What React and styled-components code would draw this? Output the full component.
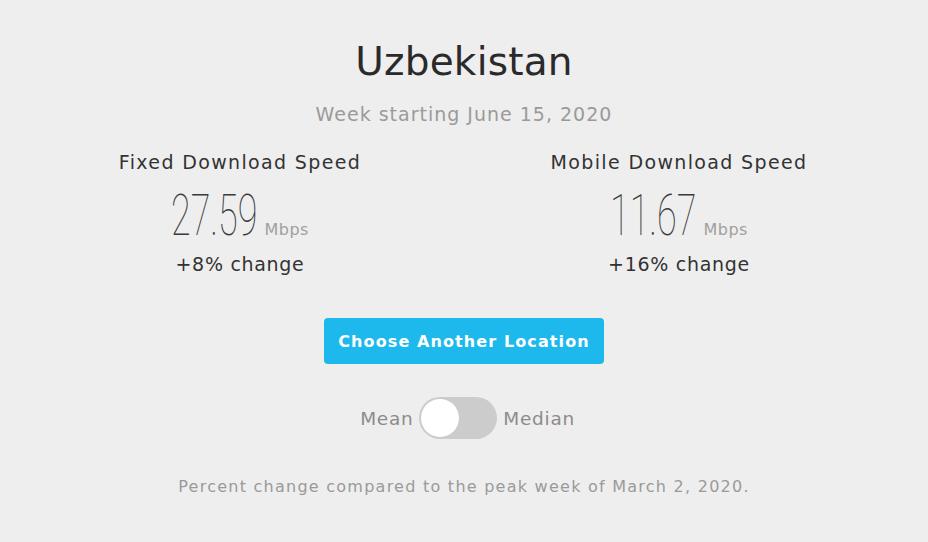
import React, { useState } from 'react';
import styled, { createGlobalStyle } from 'styled-components';

const GlobalStyle = createGlobalStyle`
  html, body {
    margin: 0;
    padding: 0;
    background: #eeeeee;
  }
  body {
    font-family: "DejaVu Sans", "Open Sans", sans-serif;
  }
`;

// speeds for the two columns
const speeds = [
  { label: 'Fixed Download Speed', value: '27.59', change: '+8% change' },
  { label: 'Mobile Download Speed', value: '11.67', change: '+16% change' },
];

const App = () => {
  const [median, setMedian] = useState(false);

  return (
    <Page>
      <GlobalStyle />
      <Title>Uzbekistan</Title>
      <Week>Week starting June 15, 2020</Week>
      <Columns>
        {speeds.map(s => (
          <Column key={s.label}>
            <Label>{s.label}</Label>
            <ValueRow>
              <Value>{s.value}</Value>
              <Unit>Mbps</Unit>
            </ValueRow>
            <Change>{s.change}</Change>
          </Column>
        ))}
      </Columns>
      <LocationButton>Choose Another Location</LocationButton>
      <ToggleRow>
        <ToggleLabel>Mean</ToggleLabel>
        <Track on={median ? 1 : 0} onClick={() => setMedian(!median)}>
          <Knob on={median ? 1 : 0} />
        </Track>
        <ToggleLabel>Median</ToggleLabel>
      </ToggleRow>
      <Footnote>Percent change compared to the peak week of March 2, 2020.</Footnote>
    </Page>
  );
};

export default App;

// Styling
const Page = styled.div`
  width: 928px;
  height: 542px;
  box-sizing: border-box;
  padding-top: 38px;
  display: flex;
  flex-direction: column;
  align-items: center;
  background: #eeeeee;
`;

const Title = styled.h1`
  margin: 0;
  font-size: 39px;
  line-height: 48px;
  font-weight: 400;
  letter-spacing: 0.2px;
  color: #2a2a2a;
`;

const Week = styled.div`
  margin-top: 16px;
  font-size: 19px;
  line-height: 24px;
  letter-spacing: 1px;
  color: #9a9a9a;
`;

const Columns = styled.div`
  margin-top: 24px;
  padding-right: 9px;
  display: grid;
  grid-template-columns: 380px 380px;
  column-gap: 59px;
`;

const Column = styled.div`
  display: flex;
  flex-direction: column;
  align-items: center;
`;

const Label = styled.div`
  font-size: 19px;
  line-height: 24px;
  letter-spacing: 1.35px;
  color: #333333;
`;

const ValueRow = styled.div`
  margin-top: 13px;
  height: 56px;
  display: flex;
  align-items: baseline;
  gap: 9px;
`;

const Value = styled.span`
  display: inline-block;
  font-family: Roboto, sans-serif;
  font-weight: 100;
  font-size: 58px;
  line-height: 56px;
  color: #3a3a3a;
  transform: scaleX(0.62);
  transform-origin: left center;
  margin-right: -55px;
`;

const Unit = styled.span`
  font-size: 16px;
  letter-spacing: 0.5px;
  color: #a0a0a0;
`;

const Change = styled.div`
  margin-top: 9px;
  font-size: 19px;
  line-height: 24px;
  letter-spacing: 0.7px;
  color: #333333;
`;

const LocationButton = styled.button`
  margin-top: 42px;
  width: 280px;
  height: 46px;
  border: none;
  border-radius: 4px;
  background: #1db9ed;
  color: #ffffff;
  font-family: "DejaVu Sans", sans-serif;
  font-size: 16px;
  font-weight: 700;
  letter-spacing: 1.1px;
  cursor: pointer;
`;

const ToggleRow = styled.div`
  margin-top: 33px;
  padding-left: 7px;
  display: flex;
  align-items: center;
  gap: 6px;
`;

const ToggleLabel = styled.span`
  font-size: 18.5px;
  letter-spacing: 0.7px;
  color: #8c8c8c;
`;

const Track = styled.div`
  width: 78px;
  height: 42px;
  border-radius: 21px;
  background: ${p => (p.on ? '#1db9ed' : '#cccccc')};
  display: flex;
  align-items: center;
  justify-content: ${p => (p.on ? 'flex-end' : 'flex-start')};
  padding: 0 2px;
  box-sizing: border-box;
  cursor: pointer;
`;

const Knob = styled.div`
  width: 38px;
  height: 38px;
  border-radius: 50%;
  background: #ffffff;
`;

const Footnote = styled.div`
  margin-top: 38px;
  font-size: 16px;
  line-height: 20px;
  letter-spacing: 1.25px;
  color: #9a9a9a;
`;
